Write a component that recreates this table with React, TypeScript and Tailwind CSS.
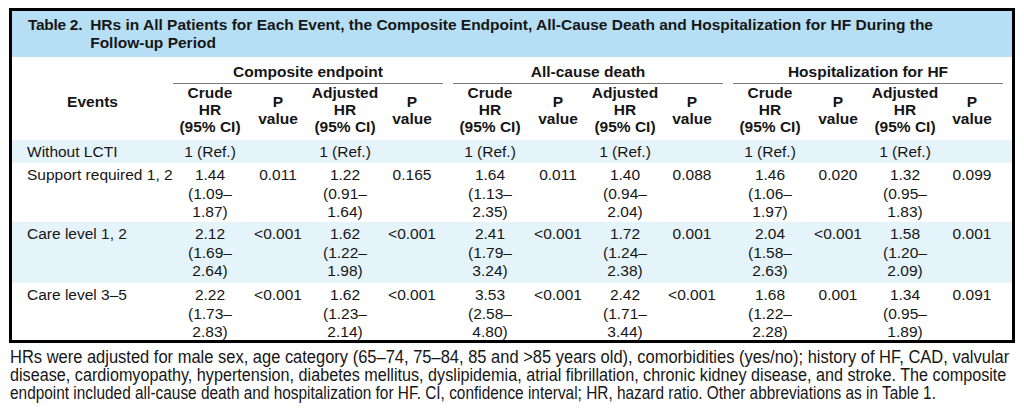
const cols =
  "grid grid-cols-[161px_74px_62px_72px_62px_10px_74px_62px_72px_62px_10px_74px_62px_72px_62px_9px]";

type Cell = string | string[];

const rows: { label: string; cells: Cell[] | null; blue: boolean; h: string }[] = [
  { label: "Without LCTI", cells: null, blue: true, h: "h-[23px]" },
  {
    label: "Support required 1, 2",
    blue: false,
    h: "h-[59px]",
    cells: [
      ["1.44", "(1.09–", "1.87)"], "0.011", ["1.22", "(0.91–", "1.64)"], "0.165",
      ["1.64", "(1.13–", "2.35)"], "0.011", ["1.40", "(0.94–", "2.04)"], "0.088",
      ["1.46", "(1.06–", "1.97)"], "0.020", ["1.32", "(0.95–", "1.83)"], "0.099",
    ],
  },
  {
    label: "Care level 1, 2",
    blue: true,
    h: "h-[61px]",
    cells: [
      ["2.12", "(1.69–", "2.64)"], "<0.001", ["1.62", "(1.22–", "1.98)"], "<0.001",
      ["2.41", "(1.79–", "3.24)"], "<0.001", ["1.72", "(1.24–", "2.38)"], "0.001",
      ["2.04", "(1.58–", "2.63)"], "<0.001", ["1.58", "(1.20–", "2.09)"], "0.001",
    ],
  },
  {
    label: "Care level 3–5",
    blue: false,
    h: "h-[57px]",
    cells: [
      ["2.22", "(1.73–", "2.83)"], "<0.001", ["1.62", "(1.23–", "2.14)"], "<0.001",
      ["3.53", "(2.58–", "4.80)"], "<0.001", ["2.42", "(1.71–", "3.44)"], "<0.001",
      ["1.68", "(1.22–", "2.28)"], "0.001", ["1.34", "(0.95–", "1.89)"], "0.091",
    ],
  },
];

const groups = ["Composite endpoint", "All-cause death", "Hospitalization for HF"];

// each footnote line is squeezed to the width it has in the printed table
const notes = [
  {
    text: "HRs were adjusted for male sex, age category (65–74, 75–84, 85 and >85 years old), comorbidities (yes/no); history of HF, CAD, valvular",
    fit: "scale-x-[0.942]",
  },
  {
    text: "disease, cardiomyopathy, hypertension, diabetes mellitus, dyslipidemia, atrial fibrillation, chronic kidney disease, and stroke. The composite",
    fit: "scale-x-[0.925]",
  },
  {
    text: "endpoint included all-cause death and hospitalization for HF. CI, confidence interval; HR, hazard ratio. Other abbreviations as in Table 1.",
    fit: "scale-x-[0.88]",
  },
];

function SubHeads() {
  return (
    <>
      <div className="flex flex-col items-center">
        <span>Crude</span>
        <span>HR</span>
        <span>(95% CI)</span>
      </div>
      <div className="flex flex-col items-center justify-center">
        <span>P</span>
        <span>value</span>
      </div>
      <div className="flex flex-col items-center">
        <span>Adjusted</span>
        <span>HR</span>
        <span>(95% CI)</span>
      </div>
      <div className="flex flex-col items-center justify-center">
        <span>P</span>
        <span>value</span>
      </div>
    </>
  );
}

function DataCell({ c }: { c: Cell }) {
  if (Array.isArray(c)) {
    return (
      <div className="flex flex-col items-center">
        {c.map((l, i) => (
          <span key={i}>{l}</span>
        ))}
      </div>
    );
  }
  return <div className="text-center">{c}</div>;
}

function RefRow() {
  return (
    <>
      <div className="text-center whitespace-nowrap">1 (Ref.)</div>
      <div />
      <div className="text-center whitespace-nowrap">1 (Ref.)</div>
      <div />
    </>
  );
}

export default function App() {
  return (
    <div className="w-[1024px] h-[409px] overflow-hidden bg-white pt-[8px] pl-[9px] font-['Liberation_Sans',Arial,sans-serif] text-[#161616]">
      <div className="w-[1006px] border-[3px] border-black">
        {/* title */}
        <div className="h-[46px] bg-[#b6dff5] pl-[16px] pt-[5px] flex gap-[8px] text-[15.5px] leading-[18px] font-bold">
          <span className="tracking-[-0.3px]">Table 2.</span>
          <span className="whitespace-nowrap">
            HRs in All Patients for Each Event, the Composite Endpoint, All-Cause Death and Hospitalization for HF During the
            <br />
            Follow-up Period
          </span>
        </div>

        {/* header */}
        <div className={`${cols} grid-rows-[auto_1fr] h-[83px] text-[15.5px] leading-[17px] font-bold`}>
          <div className="row-span-2 flex items-center justify-center pt-[6px]">Events</div>
          {groups.map((g, i) => (
            <div
              key={g}
              className={`col-span-4 ${i === 0 ? "col-start-2" : i === 1 ? "col-start-7" : "col-start-12"} pt-[6px] pb-[3px] border-b-[1.5px] border-[#7a7a7a] text-center`}
            >
              {g}
            </div>
          ))}
          <div className="col-start-2 col-span-4 row-start-2 grid grid-cols-[74px_62px_72px_62px] self-start">
            <SubHeads />
          </div>
          <div className="col-start-7 col-span-4 row-start-2 grid grid-cols-[74px_62px_72px_62px] self-start">
            <SubHeads />
          </div>
          <div className="col-start-12 col-span-4 row-start-2 grid grid-cols-[74px_62px_72px_62px] self-start">
            <SubHeads />
          </div>
        </div>

        {/* body */}
        <div className="text-[15.5px] leading-[18.5px]">
          {rows.map((r) => (
            <div key={r.label} className={`${cols} ${r.h} pt-[3px] ${r.blue ? "bg-[#e5f3fb]" : "bg-white"}`}>
              <div className="pl-[15px] whitespace-nowrap">{r.label}</div>
              {r.cells === null ? (
                <>
                  <RefRow />
                  <div />
                  <RefRow />
                  <div />
                  <RefRow />
                </>
              ) : (
                <>
                  {r.cells.slice(0, 4).map((c, i) => <DataCell key={"a" + i} c={c} />)}
                  <div />
                  {r.cells.slice(4, 8).map((c, i) => <DataCell key={"b" + i} c={c} />)}
                  <div />
                  {r.cells.slice(8, 12).map((c, i) => <DataCell key={"c" + i} c={c} />)}
                </>
              )}
            </div>
          ))}
        </div>
      </div>

      {/* footnote */}
      <div className="mt-[5px] pl-[1px] text-[17.5px] leading-[18px] text-[#161616]">
        {notes.map((n) => (
          <div key={n.text} className={`whitespace-nowrap origin-left ${n.fit}`}>
            {n.text}
          </div>
        ))}
      </div>
    </div>
  );
}
